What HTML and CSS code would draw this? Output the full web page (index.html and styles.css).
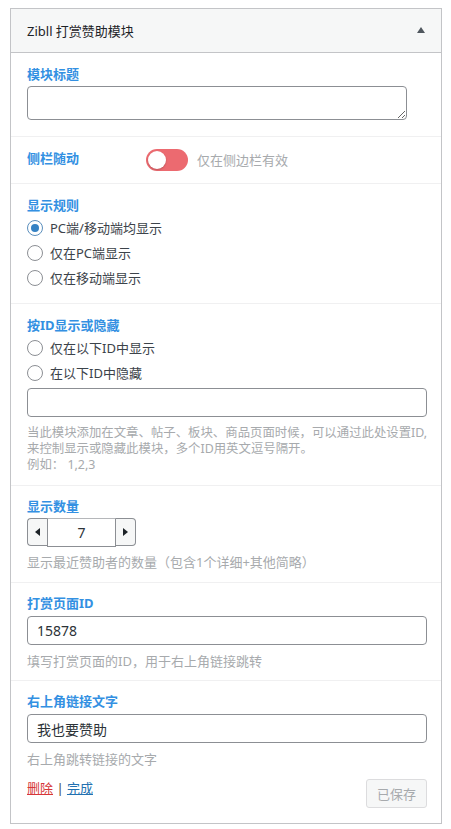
FILE: index.html
```html
<!DOCTYPE html>
<html lang="zh-CN">
<head>
<meta charset="utf-8">
<title>Zibll 打赏赞助模块</title>
<link rel="stylesheet" href="styles.css">
</head>
<body>
<div class="widget">
  <div class="widget-top">
    <h3 class="widget-title">Zibll 打赏赞助模块</h3>
    <span class="toggle-arrow"></span>
  </div>
  <div class="widget-inside">
    <div class="field field-title">
      <div class="field-label">模块标题</div>
      <textarea class="title-input"></textarea>
    </div>

    <div class="field field-switch">
      <div class="field-label switch-label">侧栏随动</div>
      <span class="switch"><span class="knob"></span></span>
      <span class="switch-desc">仅在侧边栏有效</span>
    </div>

    <div class="field field-rules">
      <div class="field-label">显示规则</div>
      <label class="radio-row"><input type="radio" name="rule" class="radio" checked>PC端/移动端均显示</label>
      <label class="radio-row"><input type="radio" name="rule" class="radio">仅在PC端显示</label>
      <label class="radio-row"><input type="radio" name="rule" class="radio">仅在移动端显示</label>
    </div>

    <div class="field field-ids">
      <div class="field-label">按ID显示或隐藏</div>
      <label class="radio-row"><input type="radio" name="idmode" class="radio">仅在以下ID中显示</label>
      <label class="radio-row"><input type="radio" name="idmode" class="radio">在以下ID中隐藏</label>
      <input type="text" class="text-input" value="">
      <div class="help help-small">当此模块添加在文章、帖子、板块、商品页面时候，可以通过此处设置ID,<br>来控制显示或隐藏此模块，多个ID用英文逗号隔开。<br>例如：&nbsp;1,2,3</div>
    </div>

    <div class="field field-count">
      <div class="field-label">显示数量</div>
      <div class="spinner">
        <span class="spin-btn spin-prev"><span class="arrow-left"></span></span>
        <input type="text" class="spin-input" value="7">
        <span class="spin-btn spin-next"><span class="arrow-right"></span></span>
      </div>
      <div class="help">显示最近赞助者的数量（包含1个详细+其他简略）</div>
    </div>

    <div class="field field-page">
      <div class="field-label">打赏页面ID</div>
      <input type="text" class="text-input" value="15878">
      <div class="help">填写打赏页面的ID，用于右上角链接跳转</div>
    </div>

    <div class="field field-link">
      <div class="field-label">右上角链接文字</div>
      <input type="text" class="text-input" value="我也要赞助">
      <div class="help">右上角跳转链接的文字</div>
      <div class="widget-footer">
        <div class="actions"><a href="#" class="link-delete">删除</a> | <a href="#" class="link-done">完成</a></div>
        <button class="save-btn" disabled>已保存</button>
      </div>
    </div>
  </div>
</div>
</body>
</html>
```

FILE: styles.css
```css
html, body {
  background: #fff;
}
body {
  margin: 0;
  padding: 8px 9px 0 10px;
  font-family: "Noto Sans", "Noto Sans CJK SC", sans-serif;
  font-size: 13px;
  color: #3c434a;
}
.widget {
  width: 430px;
  border: 1px solid #c3c4c7;
  background: #fff;
}
.widget-top {
  height: 43px;
  background: #f6f7f7;
  border-bottom: 1px solid #c3c4c7;
  display: flex;
  align-items: center;
  justify-content: space-between;
  padding: 0 16px;
}
.widget-title {
  margin: 0;
  font-size: 13px;
  font-weight: normal;
  color: #1d2327;
  line-height: 20px;
}
.toggle-arrow {
  width: 0;
  height: 0;
  border-left: 4px solid transparent;
  border-right: 4px solid transparent;
  border-bottom: 6px solid #50575e;
  margin-bottom: 2px;
}
.field {
  padding: 11px 14px 12px 16px;
  border-bottom: 1px solid #f0f0f1;
}
.field:last-child {
  border-bottom: none;
}
.field-title { padding-bottom: 16px; }
.field-switch {
  padding-top: 12px;
  padding-bottom: 12px;
  display: flex;
  align-items: center;
}
.field-rules { padding-bottom: 13px; }
.field-count { padding-top: 10px; }
.field-page { padding-top: 10px; padding-bottom: 11px; }
.field-link { padding-top: 10px; padding-bottom: 15px; }

.field-label {
  font-size: 13px;
  line-height: 20px;
  font-weight: bold;
  color: #3390e2;
}
.switch-label {
  width: 119px;
  line-height: 18px;
  margin-bottom: 4px;
}
.title-input {
  display: block;
  box-sizing: border-box;
  width: 95%;
  height: 34px;
  margin-top: 2px;
  border: 1px solid #8c8f94;
  border-radius: 4px;
  padding: 4px 8px;
  font-family: inherit;
  font-size: 14px;
  resize: both;
  background: #fff;
}
.switch {
  position: relative;
  width: 42px;
  height: 22px;
  border-radius: 11px;
  background: #ec6a70;
  flex: none;
}
.knob {
  position: absolute;
  left: 2px;
  top: 2px;
  width: 18px;
  height: 18px;
  border-radius: 50%;
  background: #fff;
  box-shadow: 0 1px 2px rgba(0,0,0,0.2);
}
.switch-desc {
  margin-left: 9px;
  color: #a7aaad;
  font-size: 13px;
  line-height: 20px;
}
.radio-row {
  display: flex;
  align-items: center;
  height: 25px;
  font-size: 13px;
  color: #3c434a;
}
.radio {
  appearance: none;
  -webkit-appearance: none;
  margin: 0 7px 0 0;
  width: 16px;
  height: 16px;
  border: 1px solid #8c8f94;
  border-radius: 50%;
  background: #fff;
  display: flex;
  align-items: center;
  justify-content: center;
  flex: none;
}
.radio:checked {
  border-color: #5b8fbd;
}
.radio:checked::before {
  content: "";
  width: 8px;
  height: 8px;
  border-radius: 50%;
  background: #3582c4;
}
.text-input {
  display: block;
  box-sizing: border-box;
  width: 100%;
  height: 29px;
  margin-top: 3px;
  border: 1px solid #8c8f94;
  border-radius: 4px;
  padding: 0 9px;
  font-family: inherit;
  font-size: 14px;
  color: #2c3338;
  background: #fff;
}
.help {
  margin-top: 8px;
  font-size: 13px;
  line-height: 16px;
  color: #a7aaad;
}
.help-small {
  font-size: 12.4px;
  white-space: nowrap;
}
.spinner {
  display: flex;
  align-items: flex-start;
  height: 28px;
  margin-top: 2px;
}
.spin-btn {
  box-sizing: border-box;
  width: 20px;
  height: 28px;
  border: 1px solid #8c8f94;
  background: #f6f7f7;
  display: flex;
  align-items: center;
  justify-content: center;
}
.spin-prev {
  border-right: none;
  border-radius: 4px 0 0 4px;
}
.spin-next {
  border-left: none;
  border-radius: 0 4px 4px 0;
}
.spin-input {
  box-sizing: border-box;
  width: 69px;
  height: 29px;
  margin: 0;
  border: 1px solid #8c8f94;
  border-top-color: #b5b7ba;
  border-radius: 0;
  padding: 0;
  text-align: center;
  font-family: inherit;
  font-size: 14px;
  color: #2c3338;
  background: #fff;
}
.arrow-left {
  width: 0;
  height: 0;
  border-top: 4px solid transparent;
  border-bottom: 4px solid transparent;
  border-right: 5px solid #1d2327;
}
.arrow-right {
  width: 0;
  height: 0;
  border-top: 4px solid transparent;
  border-bottom: 4px solid transparent;
  border-left: 5px solid #1d2327;
}
.widget-footer {
  display: flex;
  justify-content: space-between;
  align-items: flex-start;
  margin-top: 12px;
}
.actions {
  font-size: 13px;
  line-height: 18px;
  color: #3c434a;
}
.link-delete {
  color: #d63638;
}
.link-done {
  color: #2271b1;
}
.save-btn {
  box-sizing: border-box;
  width: 61px;
  height: 29px;
  border: 1px solid #dcdcde;
  border-radius: 3px;
  background: #f6f7f7;
  color: #a7aaad;
  font-family: inherit;
  font-size: 13px;
  padding: 0;
}
```
